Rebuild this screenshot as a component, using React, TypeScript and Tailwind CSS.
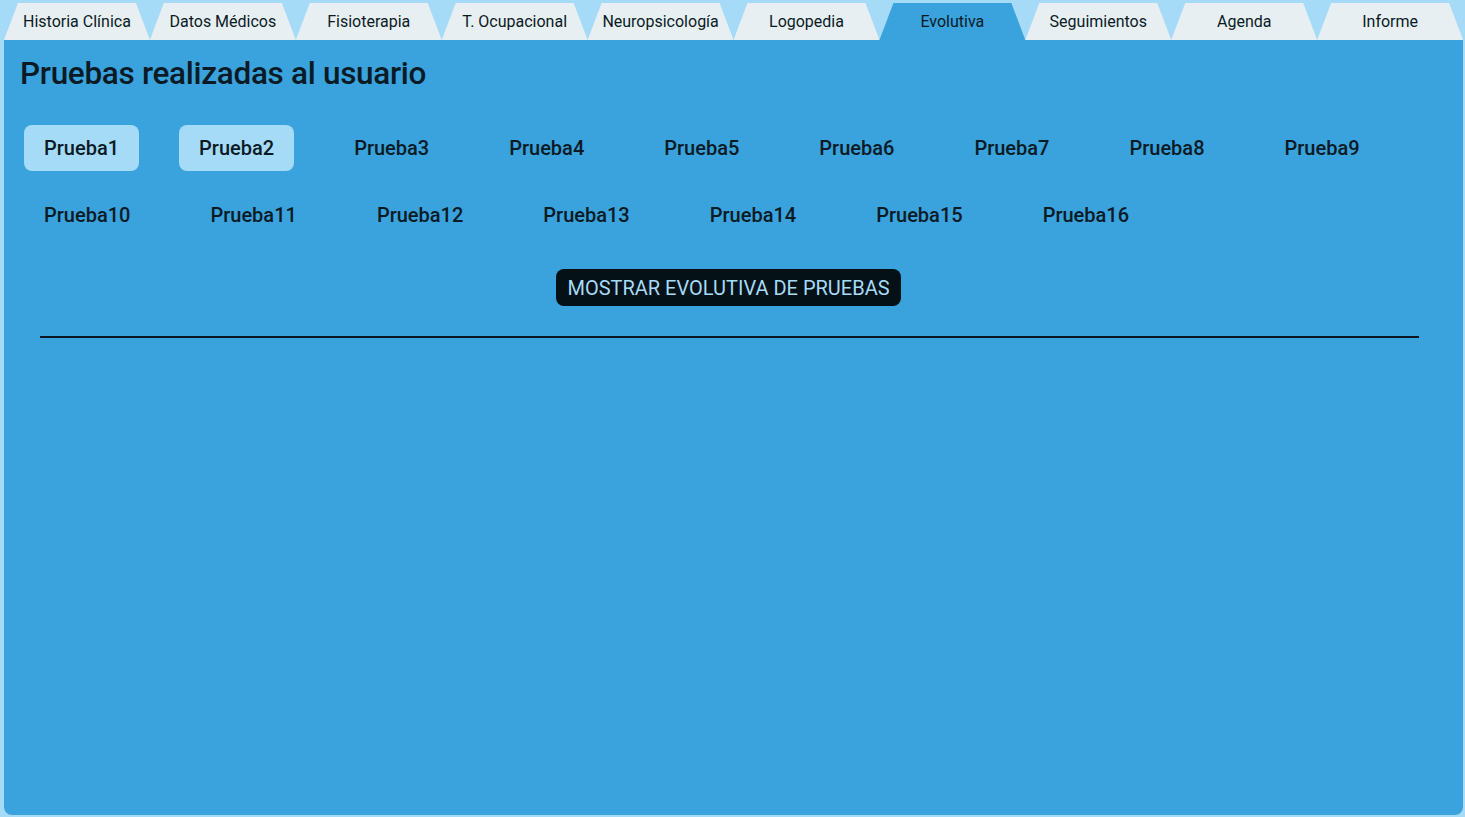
import React from "react";

const tabs = [
  "Historia Clínica",
  "Datos Médicos",
  "Fisioterapia",
  "T. Ocupacional",
  "Neuropsicología",
  "Logopedia",
  "Evolutiva",
  "Seguimientos",
  "Agenda",
  "Informe",
];

const pruebas = Array.from({ length: 16 }, (_, i) => `Prueba${i + 1}`);
const selected = ["Prueba1", "Prueba2"];

export default function App() {
  return (
    <div
      className="min-h-screen h-[817px] flex flex-col bg-[#a6dbf8] pl-[4px] pr-[2px] pt-[3px] pb-[2px] text-[#0a1b26]"
      style={{ fontFamily: "Roboto, 'Noto Sans', sans-serif" }}
    >
      {/* Tabs */}
      <div className="flex h-[37px] shrink-0">
        {tabs.map((t) => (
          <div
            key={t}
            className={`flex-1 flex items-center justify-center text-[16px] [clip-path:polygon(14px_0,calc(100%-14px)_0,100%_100%,0_100%)] ${
              t === "Evolutiva" ? "bg-[#3aa2dc]" : "bg-[#e8eff2]"
            }`}
          >
            {t}
          </div>
        ))}
      </div>

      {/* Panel */}
      <div className="flex-1 bg-[#3aa2dc] rounded-b-lg px-[16px] pt-[14px]">
        <h1 className="text-[31.5px] font-medium leading-[40px] tracking-[-0.3px]">
          Pruebas realizadas al usuario
        </h1>

        <div className="flex flex-wrap gap-x-10 gap-y-[21px] mt-[31px] pl-[4px] pr-[20px]">
          {pruebas.map((p) => (
            <button
              key={p}
              className={`h-[46px] px-5 rounded-lg text-[20px] font-medium ${
                selected.includes(p) ? "bg-[#a6dbf8]" : ""
              }`}
            >
              {p}
            </button>
          ))}
        </div>

        <div className="flex justify-center mt-[31px] pr-[10px]">
          <button className="h-[37px] px-[11px] rounded-lg bg-[#041116] text-[#a6dbf8] text-[20px]">
            MOSTRAR EVOLUTIVA DE PRUEBAS
          </button>
        </div>

        <div className="ml-[20px] mr-[28px] mt-[30px] h-[2px] bg-[#0a1620]" />
      </div>
    </div>
  );
}
